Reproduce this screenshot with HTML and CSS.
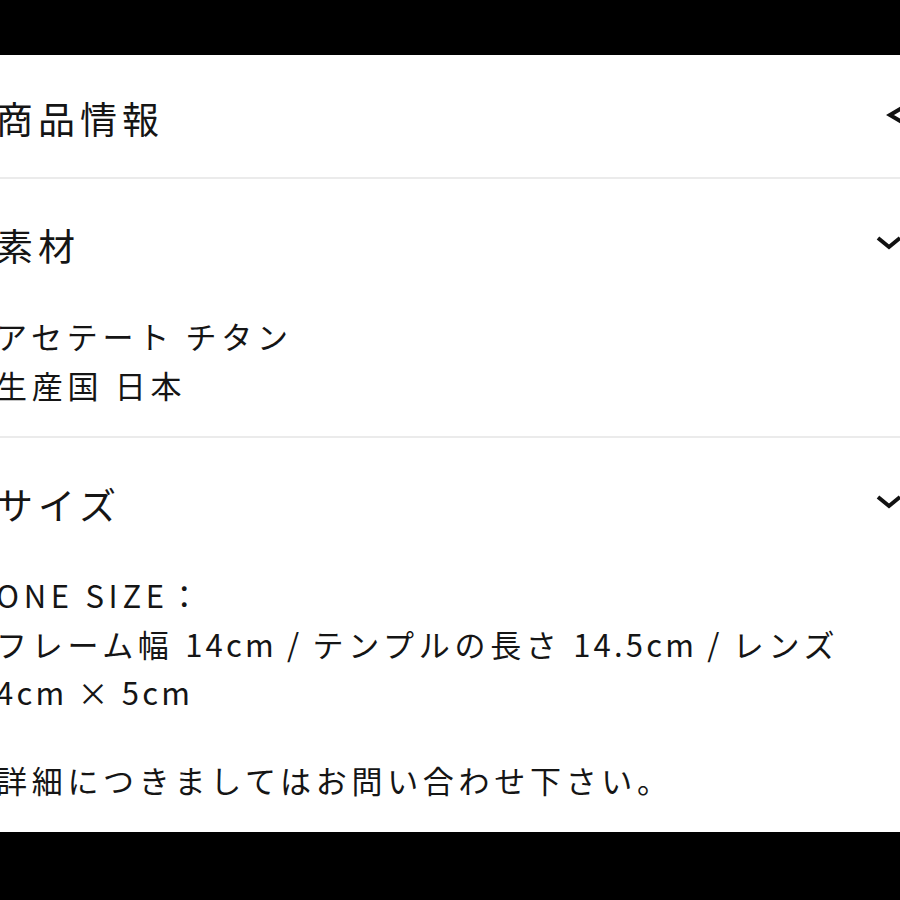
FILE: index.html
```html
<!DOCTYPE html>
<html lang="ja">
<head>
    <meta charset="UTF-8">
    <meta name="viewport" content="width=device-width, initial-scale=1.0">
    <title>商品情報</title>
    <link rel="stylesheet" href="styles.css">
</head>
<body>
    <div class="topbar"></div>
    <div class="panel">
        <div class="section">
            <div class="section-head first">
                <h2>商品情報</h2>
                <svg class="chevron" viewBox="0 0 26 26" width="26" height="26">
                    <polyline points="26,3 14,10 26,17" />
                </svg>
            </div>
        </div>
        <div class="section">
            <div class="section-head">
                <h2>素材</h2>
                <svg class="chevron" viewBox="0 0 26 26" width="26" height="26">
                    <polyline points="2,6 13,15 24,6" />
                </svg>
            </div>
            <div class="section-body">
                <p>アセテート チタン<br>生産国 日本</p>
            </div>
        </div>
        <div class="section last">
            <div class="section-head">
                <h2>サイズ</h2>
                <svg class="chevron" viewBox="0 0 26 26" width="26" height="26">
                    <polyline points="2,6 13,15 24,6" />
                </svg>
            </div>
            <div class="section-body">
                <p>ONE SIZE：<br>フレーム幅 <span class="num">14cm / </span>テンプルの長さ <span class="num">14.5cm / </span>レンズ<br><span class="num">4cm × 5cm</span></p>
                <p class="note">詳細につきましてはお問い合わせ下さい。</p>
            </div>
        </div>
    </div>
    <div class="bottombar"></div>
</body>
</html>
```

FILE: styles.css
```css
*{
    margin: 0;
    padding: 0;
    box-sizing: border-box;
}
body{
    height: 900px;
    overflow: hidden;
    display: flex;
    flex-direction: column;
    background: #000;
    font-family: "Noto Sans CJK JP", "Noto Sans", sans-serif;
    color: #151515;
}
.topbar{
    height: 55px;
}
.panel{
    height: 777px;
    background: #fff;
    margin: 0 -2px 0 -4px;
}
.bottombar{
    flex: 1;
}
.section{
    border-bottom: 2px solid #ebebeb;
}
.section.last{
    border-bottom: none;
}
.section-head{
    display: flex;
    justify-content: space-between;
    align-items: center;
    padding: 39px 0 32px;
}
.section-head.first{
    padding: 36px 0 32px;
}
.section-head h2{
    font-size: 37px;
    font-weight: 400;
    line-height: 54px;
    letter-spacing: 5px;
}
.chevron{
    flex: none;
    overflow: visible;
}
.chevron polyline{
    fill: none;
    stroke: #111;
    stroke-width: 4;
    stroke-linejoin: miter;
}
.section-body{
    padding: 8px 0 27px;
}
.section-body p{
    font-size: 31px;
    line-height: 48.5px;
    letter-spacing: 4.7px;
}
.section-body .num{
    letter-spacing: 3.2px;
}
.section-body .note{
    margin-top: 39.5px;
}
```
